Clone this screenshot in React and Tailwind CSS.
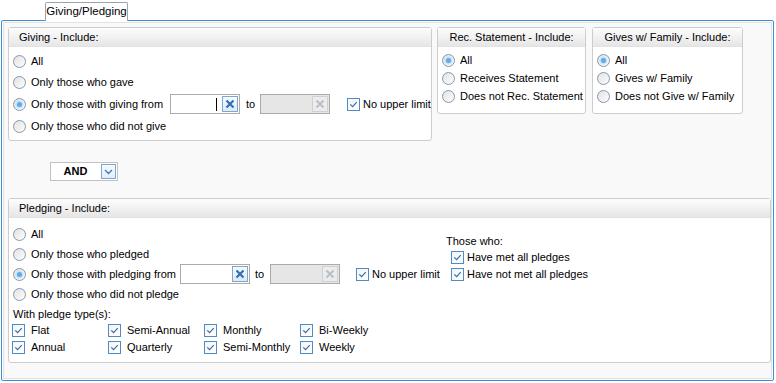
import React from 'react';

const Radio = ({ checked }) => (
  <span className="size-[13px] shrink-0 rounded-full border border-[#8497ae] bg-gradient-to-br from-[#e2e2e2] to-[#fdfdfd] flex items-center justify-center">
    {checked && <span className="size-[5px] rounded-full bg-[#62aaea] shadow-[0_0_2px_1px_#b3d8f8]" />}
  </span>
);

const Check = () => (
  <span className="size-[13px] shrink-0 border border-[#4e8bc8] bg-gradient-to-br from-[#f4f4f4] to-white flex items-center justify-center">
    <svg width="9" height="9" viewBox="0 0 9 9">
      <path d="M1.3 4.4 L3.6 6.7 L7.8 2.2" fill="none" stroke="#3a6ea8" strokeWidth="1.2" />
    </svg>
  </span>
);

const ClearBtn = ({ disabled }) => (
  <span className={`w-[16px] h-full shrink-0 border flex items-center justify-center ${disabled ? 'border-[#d0d0d0] bg-[#ececec]' : 'border-[#7fa6d0] bg-gradient-to-b from-[#f8fbfe] to-[#dde9f5]'}`}>
    <svg width="10" height="10" viewBox="0 0 10 10">
      <path d="M1.5 1.5 L8.5 8.5 M8.5 1.5 L1.5 8.5" stroke={disabled ? '#b9c2cc' : '#2f6fb4'} strokeWidth="2.2" />
    </svg>
  </span>
);

const Input = ({ disabled, caret }) => (
  <span className={`w-[70px] h-[20px] border border-[#ababab] p-[1px] flex items-center justify-end ${disabled ? 'bg-[#e6e6e6]' : 'bg-white'}`}>
    {caret && <span className="w-px h-[13px] bg-black mr-[5px]" />}
    <ClearBtn disabled={disabled} />
  </span>
);

const Group = ({ title, center, className, children }) => (
  <div className={`border border-[#cdcdcd] rounded-[3px] bg-white flex flex-col ${className}`}>
    <div className={`h-[19px] shrink-0 bg-gradient-to-b from-[#fdfdfd] to-[#e6e6e6] border-b border-[#e2e2e2] flex items-center ${center ? 'justify-center' : 'pl-[10px]'}`}>
      {title}
    </div>
    {children}
  </div>
);

const RadioRow = ({ label, checked, h = 'h-[22px]' }) => (
  <div className={`${h} flex items-center gap-[5px]`}>
    <Radio checked={checked} />
    <span>{label}</span>
  </div>
);

const CheckRow = ({ label, gap = 'gap-[3px]', className = '' }) => (
  <div className={`flex items-center ${gap} ${className}`}>
    <Check />
    <span>{label}</span>
  </div>
);

const PLEDGE_TYPES = ['Flat', 'Semi-Annual', 'Monthly', 'Bi-Weekly', 'Annual', 'Quarterly', 'Semi-Monthly', 'Weekly'];

export default function App() {
  return (
    <div className="w-[776px] h-[383px] bg-white overflow-hidden text-[11px] text-black font-['Liberation_Sans',Arial,sans-serif]">
      {/* Tab strip */}
      <div className="h-[20px] pl-[45px] pt-[2px] flex">
        <div className="relative z-10 w-[83px] h-[19px] border border-b-0 border-[#9aa5b1] rounded-t-[2px] bg-white flex items-center justify-center text-[11.5px] whitespace-nowrap">
          Giving/Pledging
        </div>
      </div>

      {/* Frame */}
      <div className="ml-[1px] w-[773px] h-[361px] border border-[#3a90d6] rounded-[2px] p-[1px]">
        <div className="h-full border border-[#e2e2e2] bg-[#f9f9f9] pl-[4px] pt-[4px]">

          {/* Top row */}
          <div className="flex items-start">
            <Group title="Giving - Include:" className="w-[424px] h-[114px]">
              <div className="pl-[4px] pt-[3px]">
                <RadioRow label="All" />
                <RadioRow label="Only those who gave" h="h-[21px]" />
                <div className="h-[22px] flex items-center">
                  <div className="w-[157px] flex items-center gap-[5px]">
                    <Radio checked />
                    <span>Only those with giving from</span>
                  </div>
                  <Input caret />
                  <span className="w-[20px] pl-[6px]">to</span>
                  <Input disabled />
                  <CheckRow label="No upper limit" className="ml-[17px]" />
                </div>
                <RadioRow label="Only those who did not give" />
              </div>
            </Group>

            <Group title="Rec. Statement - Include:" center className="ml-[5px] w-[149px] h-[87px]">
              <div className="pl-[4px] pt-[4px]">
                <RadioRow label="All" checked h="h-[18px]" />
                <RadioRow label="Receives Statement" h="h-[18px]" />
                <RadioRow label="Does not Rec. Statement" h="h-[18px]" />
              </div>
            </Group>

            <Group title="Gives w/ Family - Include:" center className="ml-[6px] w-[151px] h-[87px]">
              <div className="pl-[4px] pt-[4px]">
                <RadioRow label="All" checked h="h-[18px]" />
                <RadioRow label="Gives w/ Family" h="h-[18px]" />
                <RadioRow label="Does not Give w/ Family" h="h-[18px]" />
              </div>
            </Group>
          </div>

          {/* AND dropdown */}
          <div className="mt-[21px] ml-[42px] w-[68px] h-[19px] border border-[#c2c2c2] bg-white flex items-center p-[1px]">
            <span className="flex-1 text-center font-bold pr-[2px]">AND</span>
            <span className="w-[15px] h-full border border-[#7fa6d0] bg-gradient-to-b from-[#f8fbfe] to-[#e3edf7] flex items-center justify-center">
              <svg width="9" height="6" viewBox="0 0 9 6">
                <path d="M1 1 L4.5 4.5 L8 1" fill="none" stroke="#3a78bd" strokeWidth="1.3" />
              </svg>
            </span>
          </div>

          {/* Pledging */}
          <Group title="Pledging - Include:" className="mt-[17px] w-[763px] h-[165px]">
            <div className="pl-[4px] pt-[6px]">
              <div className="flex items-start">
                <div className="w-[433px]">
                  <RadioRow label="All" h="h-[20px]" />
                  <RadioRow label="Only those who pledged" h="h-[20px]" />
                  <div className="h-[20px] flex items-center">
                    <div className="w-[167px] flex items-center gap-[5px]">
                      <Radio checked />
                      <span>Only those with pledging from</span>
                    </div>
                    <Input />
                    <span className="w-[20px] pl-[5px]">to</span>
                    <Input disabled />
                    <CheckRow label="No upper limit" className="ml-[16px]" />
                  </div>
                  <RadioRow label="Only those who did not pledge" h="h-[20px]" />
                </div>
                <div className="mt-[9px]">
                  <div className="h-[16px] flex items-center">Those who:</div>
                  <div className="pl-[5px]">
                    <CheckRow label="Have met all pledges" className="h-[17px]" />
                    <CheckRow label="Have not met all pledges" className="h-[17px]" />
                  </div>
                </div>
              </div>

              <div className="h-[16px] mt-[2px] flex items-center">With pledge type(s):</div>
              <div className="grid grid-cols-[96px_96px_96px_96px] -ml-[1px]">
                {PLEDGE_TYPES.map(t => (
                  <CheckRow key={t} label={t} gap="gap-[6px]" className="h-[17px]" />
                ))}
              </div>
            </div>
          </Group>
        </div>
      </div>
    </div>
  );
}
